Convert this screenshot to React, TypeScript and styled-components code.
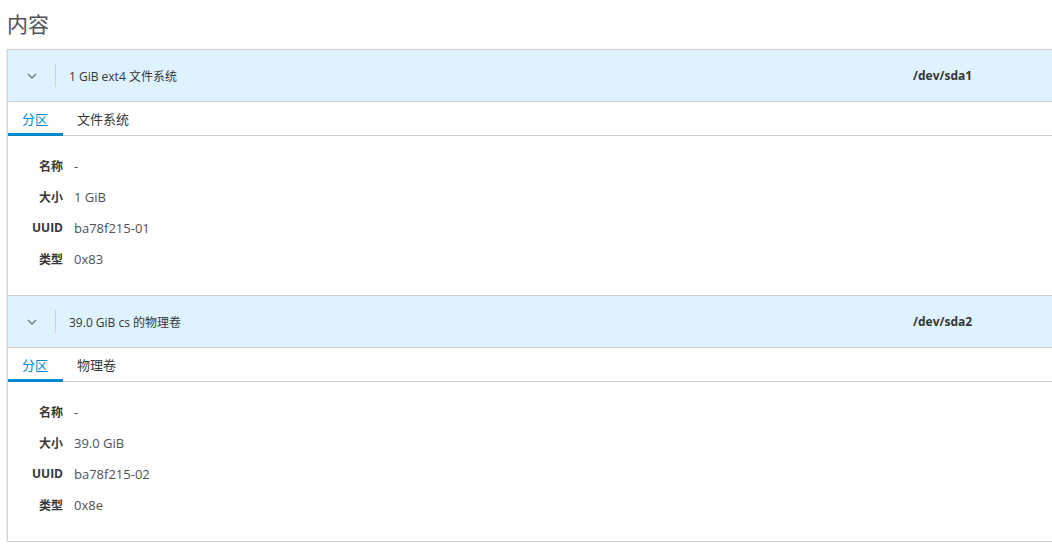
import React from "react";
import styled, { createGlobalStyle } from "styled-components";

const Global = createGlobalStyle`
  html, body { margin: 0; padding: 0; background: #fff; overflow: hidden; }
  body { font-family: "Open Sans", "Noto Sans CJK SC", sans-serif; color: #363636; }
`;

const Page = styled.div`
  padding: 10px 0 0 7px;
  width: 1070px;
`;

const Title = styled.h2`
  margin: 0 0 11px 0;
  font-size: 21px;
  font-weight: 400;
  line-height: 28px;
  color: #4d5258;
  font-family: "Open Sans", "Noto Sans CJK SC", sans-serif;
`;

const Card = styled.div`
  border: 1px solid #d1d1d1;
  box-shadow: 0 1px 2px rgba(3, 3, 3, 0.15);
  background: #fff;
`;

const Header = styled.div<{ $first?: boolean }>`
  display: flex;
  align-items: center;
  height: 51px;
  background: #def3ff;
  border-bottom: 1px solid #d1d1d1;
  border-top: ${(p) => (p.$first ? "none" : "1px solid #d1d1d1")};
  font-size: 12px;
  color: #363636;
`;

const Toggle = styled.div`
  width: 47px;
  display: flex;
  justify-content: center;
  align-items: center;
  color: #72767b;
`;

const Divider = styled.div`
  width: 1px;
  height: 23px;
  background: #d1d1d1;
  margin-right: 13px;
`;

const Description = styled.div`
  width: 844px;
`;

const Device = styled.div`
  font-weight: 700;
  color: #363636;
`;

const Tabs = styled.div`
  display: flex;
  height: 33px;
  border-bottom: 1px solid #d1d1d1;
  font-size: 13px;
`;

const Tab = styled.div<{ $active?: boolean }>`
  position: relative;
  display: flex;
  align-items: center;
  padding: 0 15px 0 14px;
  min-width: 26px;
  color: ${(p) => (p.$active ? "#0088ce" : "#363636")};
  &::after {
    content: "";
    position: absolute;
    left: 0;
    right: 0;
    bottom: -1px;
    height: 3px;
    background: ${(p) => (p.$active ? "#0088ce" : "transparent")};
  }
`;

const Body = styled.div`
  height: 159px;
  box-sizing: border-box;
  padding: 14px 0 0 24px;
`;

const Grid = styled.div`
  display: grid;
  grid-template-columns: max-content auto;
  grid-auto-rows: 31px;
  column-gap: 11px;
  align-items: center;
  justify-content: start;
`;

const Label = styled.div`
  text-align: right;
  font-weight: 700;
  font-size: 12px;
  color: #363636;
`;

const Value = styled.div`
  font-size: 13px;
  color: #4d5258;
`;

const Chevron = () => (
  <svg width="10" height="6" viewBox="0 0 10 6">
    <polyline points="1,1 5,5 9,1" fill="none" stroke="#72767b" strokeWidth="1.3" />
  </svg>
);

type Section = {
  desc: string;
  dev: string;
  tab2: string;
  rows: [string, string][];
};

const sections: Section[] = [
  {
    desc: "1 GiB ext4 文件系统",
    dev: "/dev/sda1",
    tab2: "文件系统",
    rows: [
      ["名称", "-"],
      ["大小", "1 GiB"],
      ["UUID", "ba78f215-01"],
      ["类型", "0x83"],
    ],
  },
  {
    desc: "39.0 GiB cs 的物理卷",
    dev: "/dev/sda2",
    tab2: "物理卷",
    rows: [
      ["名称", "-"],
      ["大小", "39.0 GiB"],
      ["UUID", "ba78f215-02"],
      ["类型", "0x8e"],
    ],
  },
];

export default function App() {
  return (
    <Page>
      <Global />
      <Title>内容</Title>
      <Card>
        {sections.map((s, i) => (
          <React.Fragment key={s.dev}>
            <Header $first={i === 0}>
              <Toggle>
                <Chevron />
              </Toggle>
              <Divider />
              <Description>{s.desc}</Description>
              <Device>{s.dev}</Device>
            </Header>
            <Tabs>
              <Tab $active>分区</Tab>
              <Tab>{s.tab2}</Tab>
            </Tabs>
            <Body>
              <Grid>
                {s.rows.map(([k, v]) => (
                  <React.Fragment key={k}>
                    <Label>{k}</Label>
                    <Value>{v}</Value>
                  </React.Fragment>
                ))}
              </Grid>
            </Body>
          </React.Fragment>
        ))}
      </Card>
    </Page>
  );
}
